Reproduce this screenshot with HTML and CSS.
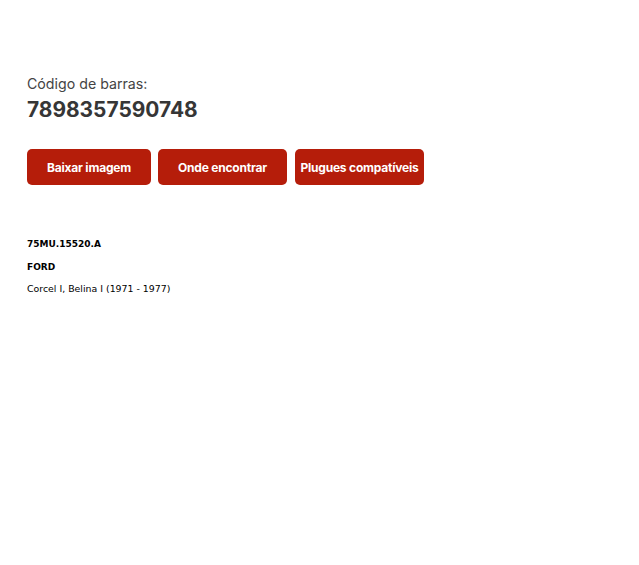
FILE: index.html
```html
<!DOCTYPE html>
<html lang="pt-BR">
<head>
    <meta charset="UTF-8">
    <title>Produto</title>
    <link rel="stylesheet" href="styles.css">
</head>
<body>
    <div class="page">
        <div class="barcode">
            <div class="label">Código de barras:</div>
            <div class="number">7898357590748</div>
        </div>
        <div class="actions">
            <a class="button btn-img">Baixar imagem</a>
            <a class="button btn-where">Onde encontrar</a>
            <a class="button btn-plugs">Plugues compatíveis</a>
        </div>
        <div class="details">
            <div class="code">75MU.15520.A</div>
            <div class="brand">FORD</div>
            <div class="models">Corcel I, Belina I (1971 - 1977)</div>
        </div>
    </div>
</body>
</html>
```

FILE: styles.css
```css
html, body{
    margin: 0;
    padding: 0;
    background: #fff;
}
.page{
    padding: 75px 27px 0;
    font-family: Inter, "Noto Sans", sans-serif;
}
.barcode .label{
    font-size: 14.2px;
    color: #444;
    line-height: 18px;
}
.barcode .number{
    font-size: 20.9px;
    font-weight: 700;
    color: #363636;
    line-height: 30px;
    margin-top: 2px;
}
.actions{
    display: flex;
    gap: 7px;
    margin-top: 24px;
}
.button{
    display: inline-flex;
    align-items: center;
    justify-content: center;
    height: 36px;
    border-radius: 5px;
    background: #b51d0a;
    color: #fff;
    font-size: 12px;
    font-weight: 700;
    letter-spacing: -0.2px;
}
.btn-img{ width: 124px; }
.btn-where{ width: 129px; }
.btn-plugs{ width: 129px; margin-left: 1px; }
.details{
    margin-top: 53px;
    font-family: "DejaVu Sans", Verdana, sans-serif;
    font-size: 9.4px;
    color: #000;
}
.details .code,
.details .brand{
    font-weight: 700;
    font-size: 9px;
}
.details > div{
    line-height: 12px;
    margin-bottom: 10.5px;
}
```
